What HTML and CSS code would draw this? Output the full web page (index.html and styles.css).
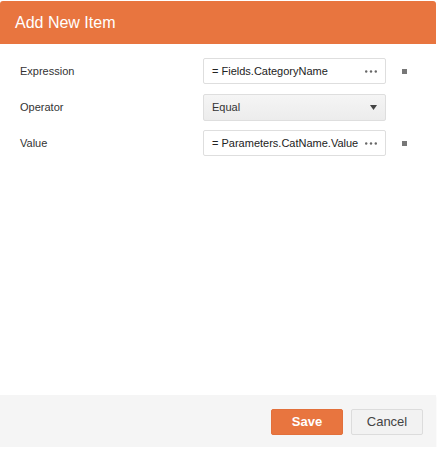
FILE: index.html
```html
<!DOCTYPE html>
<html>
<head>
<meta charset="utf-8">
<link rel="stylesheet" href="styles.css">
</head>
<body>
<div class="dialog">
  <div class="header">Add New Item</div>
  <div class="content">
    <div class="row">
      <div class="label">Expression</div>
      <div class="field input"><span class="val">= Fields.CategoryName</span>
        <svg class="dots" width="12" height="3" viewBox="0 0 12 3"><circle cx="1.2" cy="1.5" r="1.2" fill="#666"/><circle cx="6" cy="1.5" r="1.2" fill="#666"/><circle cx="10.8" cy="1.5" r="1.2" fill="#666"/></svg>
      </div>
      <div class="marker"></div>
    </div>
    <div class="row">
      <div class="label">Operator</div>
      <div class="field select"><span class="val">Equal</span>
        <svg class="arrow" width="7" height="5" viewBox="0 0 7 5"><path d="M0 0 H7 L3.5 5 Z" fill="#444"/></svg>
      </div>
      <div class="marker hidden"></div>
    </div>
    <div class="row">
      <div class="label">Value</div>
      <div class="field input"><span class="val">= Parameters.CatName.Value</span>
        <svg class="dots" width="12" height="3" viewBox="0 0 12 3"><circle cx="1.2" cy="1.5" r="1.2" fill="#666"/><circle cx="6" cy="1.5" r="1.2" fill="#666"/><circle cx="10.8" cy="1.5" r="1.2" fill="#666"/></svg>
      </div>
      <div class="marker"></div>
    </div>
  </div>
  <div class="footer">
    <button class="btn save">Save</button>
    <button class="btn cancel">Cancel</button>
  </div>
</div>
</body>
</html>
```

FILE: styles.css
```css
html, body {
  margin: 0;
  padding: 0;
  background: #fff;
}
body {
  font-family: "Liberation Sans", Arial, sans-serif;
}
.dialog {
  width: 436px;
  margin-top: 1px;
  display: flex;
  flex-direction: column;
}
.header {
  height: 43px;
  box-sizing: border-box;
  background: #e8753f;
  color: #fff;
  font-size: 16px;
  line-height: 43px;
  padding-left: 15px;
  border-radius: 3px 3px 0 0;
}
.content {
  height: 351px;
  box-sizing: border-box;
  padding: 14px 0 0 20px;
  display: flex;
  flex-direction: column;
  gap: 10px;
}
.row {
  display: flex;
  align-items: center;
  height: 26px;
}
.label {
  width: 183px;
  font-size: 11px;
  color: #333;
}
.field {
  width: 183px;
  height: 26px;
  box-sizing: border-box;
  border: 1px solid #dedede;
  border-radius: 2px;
  display: flex;
  align-items: center;
  justify-content: space-between;
  padding: 0 8px 0 8px;
  font-size: 11px;
  color: #222;
}
.input {
  background: #fff;
}
.select {
  background: linear-gradient(#f5f5f5, #ececec);
  color: #333;
  padding-right: 8px;
  height: 27px;
}
.dots,
.arrow {
  display: block;
  flex: none;
}
.marker {
  width: 5px;
  height: 5px;
  background: #777;
  margin-left: 16px;
}
.marker.hidden {
  visibility: hidden;
}
.footer {
  height: 52px;
  box-sizing: border-box;
  background: #f5f5f5;
  display: flex;
  justify-content: flex-end;
  align-items: center;
  gap: 8px;
  padding: 1px 13px 0 0;
  box-shadow: 0 2px 2px rgba(0,0,0,0.06);
}
.btn {
  width: 72px;
  height: 26px;
  border-radius: 2px;
  font-family: "Liberation Sans", Arial, sans-serif;
  font-size: 13px;
  cursor: pointer;
}
.save {
  background: #e8753f;
  border: 1px solid #e2703b;
  color: #fff;
  font-weight: bold;
}
.cancel {
  background: #f2f2f2;
  border: 1px solid #dcdcdc;
  color: #444;
}
```
